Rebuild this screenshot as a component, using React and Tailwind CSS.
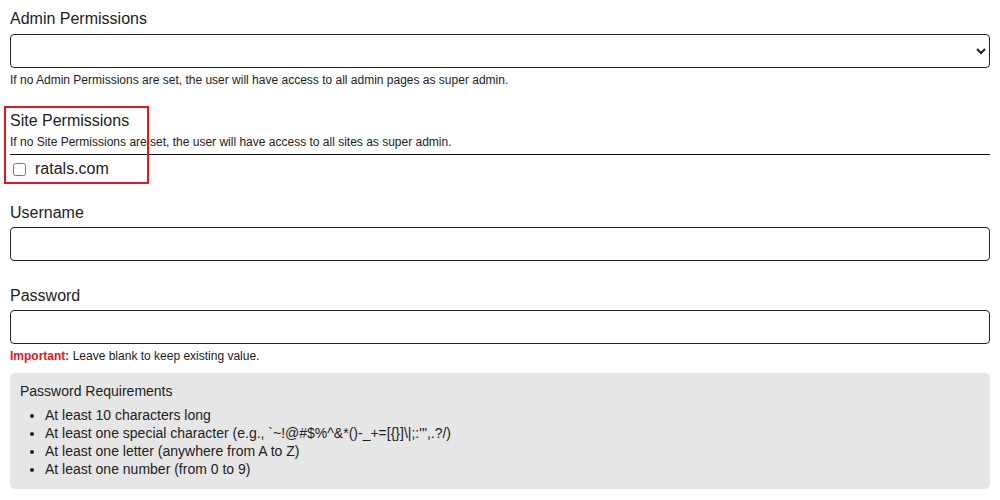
export default function App() {
  return (
    <div className="px-[10px] pt-[10px] pb-[11px] font-['Liberation_Sans',Arial,sans-serif] text-[#222] bg-white">
      <label className="block text-[16px] leading-[18px]">Admin Permissions</label>
      <select className="mt-[6px] block h-[34px] w-full rounded-[4px] border border-[#222] bg-white px-[6px] text-[14px]">
        <option></option>
      </select>
      <p className="mt-[6px] text-[12px] leading-[13px]">
        If no Admin Permissions are set, the user will have access to all admin pages as super admin.
      </p>

      <div className="relative mt-[25px]">
        <div className="pointer-events-none absolute left-[-6px] top-[-6px] h-[78px] w-[145px] border-2 border-[#e3171f]"></div>
        <div className="text-[16px] leading-[18px]">Site Permissions</div>
        <p className="mt-[6px] text-[12px] leading-[13px]">
          If no Site Permissions are set, the user will have access to all sites as super admin.
        </p>
        <div className="mt-[5px] border-t border-[#111]"></div>
        <label className="mt-[5px] flex h-[18px] items-center text-[16px] leading-[18px]">
          <input type="checkbox" className="m-0 ml-[3px] mr-[9px] h-[13px] w-[13px]" />
          <span>ratals.com</span>
        </label>
      </div>

      <label className="mt-[26px] block text-[16px] leading-[18px]">Username</label>
      <input type="text" className="mt-[5px] block h-[34px] w-full rounded-[4px] border border-[#222] bg-white px-[6px]" />

      <label className="mt-[26px] block text-[16px] leading-[18px]">Password</label>
      <input type="password" className="mt-[5px] block h-[34px] w-full rounded-[4px] border border-[#222] bg-white px-[6px]" />
      <p className="mt-[6px] text-[12px] leading-[13px]">
        <span className="font-bold text-[#e3171f]">Important:</span> Leave blank to keep existing value.
      </p>

      <div className="mt-[10px] rounded-[5px] bg-[#e6e6e6] px-[10px] pt-[10px] pb-[11px]">
        <div className="text-[14px] leading-[16px]">Password Requirements</div>
        <ul className="mt-[7px] list-disc pl-[25px] text-[14px] leading-[18px]">
          <li>At least 10 characters long</li>
          <li>At least one special character (e.g., `~!@#$%^&amp;*()-_+=[{"{"}{"}"}]\|;:'",.?/)</li>
          <li>At least one letter (anywhere from A to Z)</li>
          <li>At least one number (from 0 to 9)</li>
        </ul>
      </div>
    </div>
  );
}
